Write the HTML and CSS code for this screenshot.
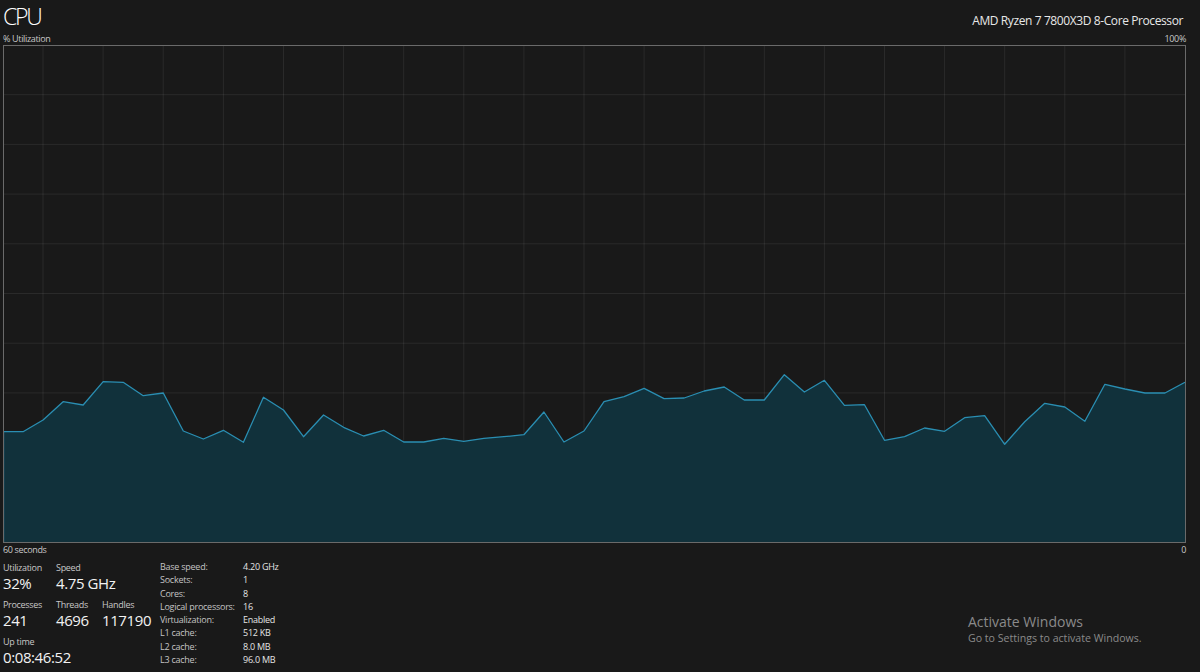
FILE: index.html
```html
<!DOCTYPE html>
<html>
<head>
<meta charset="utf-8">
<link rel="stylesheet" href="styles.css">
</head>
<body>
<div class="page">
  <header class="head">
    <h1 class="title">CPU</h1>
    <div class="model">AMD Ryzen 7 7800X3D 8-Core Processor</div>
  </header>
  <div class="axis-row">
    <span>% Utilization</span>
    <span>100%</span>
  </div>
  <svg class="graph" width="1183" height="498" viewBox="0 0 1183 498">
    <g class="grid">
      <line x1="40" y1="0" x2="40" y2="498"/>
      <line x1="100.1" y1="0" x2="100.1" y2="498"/>
      <line x1="160.2" y1="0" x2="160.2" y2="498"/>
      <line x1="220.4" y1="0" x2="220.4" y2="498"/>
      <line x1="280.5" y1="0" x2="280.5" y2="498"/>
      <line x1="340.6" y1="0" x2="340.6" y2="498"/>
      <line x1="400.7" y1="0" x2="400.7" y2="498"/>
      <line x1="460.8" y1="0" x2="460.8" y2="498"/>
      <line x1="520.9" y1="0" x2="520.9" y2="498"/>
      <line x1="581" y1="0" x2="581" y2="498"/>
      <line x1="641.1" y1="0" x2="641.1" y2="498"/>
      <line x1="701.2" y1="0" x2="701.2" y2="498"/>
      <line x1="761.3" y1="0" x2="761.3" y2="498"/>
      <line x1="821.4" y1="0" x2="821.4" y2="498"/>
      <line x1="881.5" y1="0" x2="881.5" y2="498"/>
      <line x1="941.6" y1="0" x2="941.6" y2="498"/>
      <line x1="1001.7" y1="0" x2="1001.7" y2="498"/>
      <line x1="1061.8" y1="0" x2="1061.8" y2="498"/>
      <line x1="1121.9" y1="0" x2="1121.9" y2="498"/>
      <line x1="0" y1="49.7" x2="1183" y2="49.7"/>
      <line x1="0" y1="99.4" x2="1183" y2="99.4"/>
      <line x1="0" y1="149.1" x2="1183" y2="149.1"/>
      <line x1="0" y1="198.8" x2="1183" y2="198.8"/>
      <line x1="0" y1="248.5" x2="1183" y2="248.5"/>
      <line x1="0" y1="298.2" x2="1183" y2="298.2"/>
      <line x1="0" y1="347.9" x2="1183" y2="347.9"/>
      <line x1="0" y1="397.6" x2="1183" y2="397.6"/>
      <line x1="0" y1="447.3" x2="1183" y2="447.3"/>
    </g>
    <polygon class="area" points="0,497 0,386.7 20.03,386.7 40.07,375 60.1,356.7 80.14,360 100.17,336.7 120.2,337.3 140.24,350.7 160.27,348 180.31,386 200.34,394 220.37,385.3 240.41,397.3 260.44,352.3 280.48,365 300.51,391.7 320.54,370 340.58,382.3 360.61,391 380.65,385.3 400.68,397 420.71,397 440.75,393.3 460.78,396.3 480.82,393.3 500.85,391.7 520.88,389.7 540.92,367 560.95,397 580.99,386 601.02,356.7 621.05,351.7 641.09,343.3 661.12,353.7 681.16,353 701.19,346 721.22,342 741.26,355 761.29,355 781.33,329.7 801.36,347 821.39,335.3 841.43,360.3 861.46,359.7 881.5,395.3 901.53,391.7 921.56,383 941.6,386.3 961.63,372.7 981.67,370.7 1001.7,399.3 1021.73,376.7 1041.77,358.3 1061.8,362 1081.84,376.3 1101.87,339.3 1121.9,344 1141.94,348 1161.97,348 1182,337.3 1182,497"/>
    <polyline class="line" points="0.5,497 0.5,386.7 20.03,386.7 40.07,375 60.1,356.7 80.14,360 100.17,336.7 120.2,337.3 140.24,350.7 160.27,348 180.31,386 200.34,394 220.37,385.3 240.41,397.3 260.44,352.3 280.48,365 300.51,391.7 320.54,370 340.58,382.3 360.61,391 380.65,385.3 400.68,397 420.71,397 440.75,393.3 460.78,396.3 480.82,393.3 500.85,391.7 520.88,389.7 540.92,367 560.95,397 580.99,386 601.02,356.7 621.05,351.7 641.09,343.3 661.12,353.7 681.16,353 701.19,346 721.22,342 741.26,355 761.29,355 781.33,329.7 801.36,347 821.39,335.3 841.43,360.3 861.46,359.7 881.5,395.3 901.53,391.7 921.56,383 941.6,386.3 961.63,372.7 981.67,370.7 1001.7,399.3 1021.73,376.7 1041.77,358.3 1061.8,362 1081.84,376.3 1101.87,339.3 1121.9,344 1141.94,348 1161.97,348 1182,337.3"/>
    <rect class="frame" x="0.5" y="0.5" width="1182" height="497"/>
  </svg>
  <div class="axis-row">
    <span>60 seconds</span>
    <span>0</span>
  </div>
  <section class="stats">
    <div class="live">
      <div class="stat">
        <div class="label">Utilization</div>
        <div class="value">32%</div>
      </div>
      <div class="stat wide">
        <div class="label">Speed</div>
        <div class="value">4.75 GHz</div>
      </div>
      <div class="stat">
        <div class="label">Processes</div>
        <div class="value">241</div>
      </div>
      <div class="stat">
        <div class="label">Threads</div>
        <div class="value">4696</div>
      </div>
      <div class="stat">
        <div class="label">Handles</div>
        <div class="value">117190</div>
      </div>
      <div class="stat full">
        <div class="label">Up time</div>
        <div class="value">0:08:46:52</div>
      </div>
    </div>
    <dl class="specs">
      <dt>Base speed:</dt><dd>4.20 GHz</dd>
      <dt>Sockets:</dt><dd>1</dd>
      <dt>Cores:</dt><dd>8</dd>
      <dt>Logical processors:</dt><dd>16</dd>
      <dt>Virtualization:</dt><dd>Enabled</dd>
      <dt>L1 cache:</dt><dd>512 KB</dd>
      <dt>L2 cache:</dt><dd>8.0 MB</dd>
      <dt>L3 cache:</dt><dd>96.0 MB</dd>
    </dl>
  </section>
</div>
<div class="activate">
  <div class="activate-title">Activate Windows</div>
  <div class="activate-sub">Go to Settings to activate Windows.</div>
</div>
</body>
</html>
```

FILE: styles.css
```css
html, body {
  margin: 0;
  padding: 0;
}
body {
  background: #191919;
  width: 1200px;
  height: 672px;
  overflow: hidden;
  position: relative;
  font-family: "Open Sans", "Noto Sans", sans-serif;
  color: #e6e6e6;
}
.page {
  padding-left: 3px;
  width: 1183px;
}
.head {
  display: flex;
  justify-content: space-between;
  align-items: baseline;
  padding-top: 1px;
  height: 30px;
}
.title {
  margin: 0;
  font-size: 23px;
  font-weight: 300;
  line-height: 30px;
  letter-spacing: -2.2px;
  color: #ffffff;
}
.model {
  font-size: 12px;
  line-height: 30px;
  letter-spacing: -0.4px;
  color: #e8e8e8;
  padding-right: 3px;
}
.axis-row {
  display: flex;
  justify-content: space-between;
  font-size: 9px;
  line-height: 13px;
  height: 13px;
  letter-spacing: -0.35px;
  color: #c8c8c8;
}
.head + .axis-row {
  margin-top: 1px;
}
.graph {
  display: block;
}
.grid line {
  stroke: rgba(255, 255, 255, 0.075);
  stroke-width: 1;
}
.area {
  fill: #11313b;
}
.line {
  fill: none;
  stroke: #2a8eb2;
  stroke-width: 1.3;
  stroke-linejoin: round;
}
.frame {
  fill: none;
  stroke: #6a6a6a;
  stroke-width: 1;
}
.stats {
  display: flex;
  margin-top: 5px;
}
.live {
  width: 157px;
  display: grid;
  grid-template-columns: 53px 46px 1fr;
  row-gap: 6px;
  align-content: start;
}
.stat.wide {
  grid-column: 2 / span 2;
}
.stat.full {
  grid-column: 1 / span 3;
}
.label {
  font-size: 9px;
  line-height: 13px;
  letter-spacing: -0.3px;
  color: #c8c8c8;
  white-space: nowrap;
}
.value {
  font-size: 15px;
  line-height: 18px;
  color: #f2f2f2;
  white-space: nowrap;
  letter-spacing: -0.4px;
}
.specs {
  margin: -1px 0 0 0;
  display: grid;
  grid-template-columns: 83px auto;
  grid-auto-rows: 13.3px;
  font-size: 9px;
  line-height: 13.3px;
  letter-spacing: -0.25px;
}
.specs dt {
  color: #c4c4c4;
  white-space: nowrap;
}
.specs dd {
  margin: 0;
  color: #e4e4e4;
  white-space: nowrap;
}
.activate {
  position: absolute;
  left: 968px;
  top: 612px;
  color: #8a8a8a;
}
.activate-title {
  font-size: 14px;
  line-height: 19px;
}
.activate-sub {
  font-size: 10.6px;
  line-height: 15px;
}
```
